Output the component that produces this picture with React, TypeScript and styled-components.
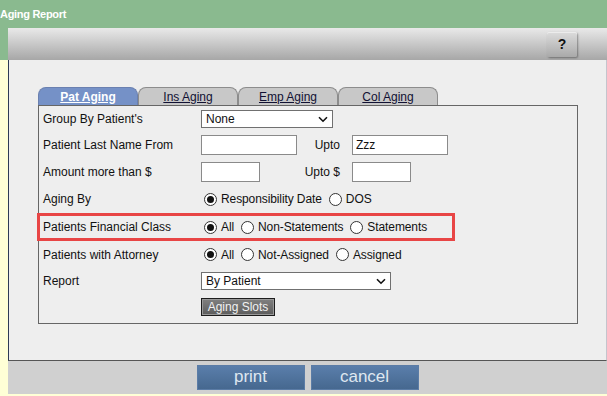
import React from "react";
import styled, { createGlobalStyle } from "styled-components";

const GlobalStyle = createGlobalStyle`
  html, body { margin: 0; padding: 0; }
  body {
    background: #ffffd6;
    font-family: "Liberation Sans", Arial, sans-serif;
    font-size: 12px;
    color: #111;
  }
`;

const Page = styled.div`
  width: 607px;
  height: 396px;
  overflow: hidden;
  background: linear-gradient(to bottom, #8aba8f 0, #8aba8f 60px, #ffffd6 60px);
`;

const TitleBar = styled.div`
  height: 28px;
  display: flex;
  align-items: center;
  color: #fff;
  font-weight: bold;
  font-size: 11px;
  letter-spacing: -0.3px;
`;

const Window = styled.div`
  margin-left: 8px;
  width: 599px;
`;

const Toolbar = styled.div`
  height: 32px;
  background: linear-gradient(#e9e9e9, #a7a7a7);
  display: flex;
  justify-content: flex-end;
  align-items: center;
  padding-right: 30px;
`;

const HelpButton = styled.button`
  width: 30px;
  height: 25px;
  border: 0;
  border-radius: 2px;
  background: linear-gradient(#dcdcdc, #a9a9a9);
  box-shadow: 1px 1px 2px rgba(0, 0, 0, 0.35), inset 0 1px 0 #ececec;
  font: bold 14px "Liberation Sans", Arial, sans-serif;
  color: #111;
  padding: 0;
`;

const Panel = styled.div`
  background: #eeeeee;
  border-left: 1px solid #2e3a55;
  border-right: 1px solid #c4c4cc;
  border-bottom: 1px solid #555;
  padding: 27px 0 36px 29px;
`;

const Tabs = styled.div`
  display: flex;
  height: 18px;
`;

const Tab = styled.div<{ $active?: boolean }>`
  width: 100px;
  height: 18px;
  box-sizing: border-box;
  border: 1px solid ${(p) => (p.$active ? "#6a80b0" : "#8c8c8c")};
  border-bottom: none;
  border-radius: 8px 8px 0 0;
  background: ${(p) => (p.$active ? "#7591c7" : "#c8c8c8")};
  color: ${(p) => (p.$active ? "#fff" : "#111133")};
  font-weight: ${(p) => (p.$active ? "bold" : "normal")};
  text-decoration: underline;
  text-align: center;
  line-height: 18px;
  cursor: pointer;
`;

const Box = styled.div`
  width: 540px;
  box-sizing: border-box;
  border: 1px solid #666;
  padding-bottom: 2px;
`;

const Row = styled.div<{ $h: number; $hl?: boolean }>`
  display: grid;
  grid-template-columns: 158px auto;
  align-items: center;
  box-sizing: border-box;
  height: ${(p) => p.$h}px;
  padding-left: ${(p) => (p.$hl ? 3 : 4)}px;
  ${(p) =>
    p.$hl &&
    `
    margin-left: -2px;
    width: 418px;
    border: 3px solid #e84545;
  `}
`;

const Label = styled.span`
  white-space: nowrap;
`;

const Controls = styled.div`
  display: flex;
  align-items: center;
`;

const SelectWrap = styled.div<{ $w: number }>`
  position: relative;
  width: ${(p) => p.$w}px;
  height: 18px;
`;

const Select = styled.select`
  appearance: none;
  width: 100%;
  height: 18px;
  box-sizing: border-box;
  border: 1px solid #707070;
  background: #fff;
  padding: 0 0 0 4px;
  font: 12px "Liberation Sans", Arial, sans-serif;
  color: #111;
  outline: none;
`;

const Chevron = styled.svg`
  position: absolute;
  right: 5px;
  top: 6px;
  pointer-events: none;
`;

const TextInput = styled.input<{ $w: number }>`
  width: ${(p) => p.$w}px;
  height: 20px;
  box-sizing: border-box;
  border: 1px solid #8a8a8a;
  background: #fff;
  padding: 0 3px;
  font: 12px "Liberation Sans", Arial, sans-serif;
  color: #111;
  outline: none;
`;

const SubLabel = styled.span<{ $w: number }>`
  width: ${(p) => p.$w}px;
  box-sizing: border-box;
  padding-right: 12px;
  text-align: right;
`;

const RadioLabel = styled.label`
  display: inline-flex;
  align-items: center;
  margin-right: 4px;
  white-space: nowrap;
  letter-spacing: -0.1px;
  cursor: pointer;
`;

const RadioDot = styled.span<{ $on?: boolean }>`
  width: 13px;
  height: 13px;
  box-sizing: border-box;
  border-radius: 50%;
  border: 1px solid #333;
  background: #fff;
  margin: 0 4px 0 3px;
  display: inline-flex;
  align-items: center;
  justify-content: center;
  &::after {
    content: "";
    width: 7px;
    height: 7px;
    border-radius: 50%;
    background: ${(p) => (p.$on ? "#111" : "transparent")};
  }
`;

const SlotsButton = styled.button`
  width: 74px;
  height: 18px;
  padding: 0;
  border: 1px solid #1c1c1c;
  background: linear-gradient(#808080, #5c5c5c);
  box-shadow: inset 0 0 0 1px #999;
  color: #f2f2f2;
  font: 12px "Liberation Sans", Arial, sans-serif;
`;

const Footer = styled.div`
  height: 33px;
  box-sizing: border-box;
  background: #d0d0d0;
  display: flex;
  justify-content: center;
  align-items: flex-start;
  gap: 6px;
  padding-top: 4px;
`;

const ActionButton = styled.button`
  width: 108px;
  height: 25px;
  border: 1px solid #5b7ca6;
  background: linear-gradient(#5a7eab, #46688f);
  color: #dfe7f0;
  font: 17px "Liberation Sans", Arial, sans-serif;
  padding: 0 0 2px;
`;

const Radio: React.FC<{ label: string; on?: boolean }> = ({ label, on }) => (
  <RadioLabel>
    <RadioDot $on={on} />
    {label}
  </RadioLabel>
);

const Dropdown: React.FC<{ w: number; value: string }> = ({ w, value }) => (
  <SelectWrap $w={w}>
    <Select defaultValue={value}>
      <option>{value}</option>
    </Select>
    <Chevron width="10" height="7" viewBox="0 0 10 7">
      <path d="M1 1.2 L5 5.2 L9 1.2" fill="none" stroke="#111" strokeWidth="1.6" />
    </Chevron>
  </SelectWrap>
);

const App: React.FC = () => {
  return (
    <Page>
      <GlobalStyle />
      <TitleBar>Aging Report</TitleBar>
      <Window>
        <Toolbar>
          <HelpButton>?</HelpButton>
        </Toolbar>
        <Panel>
          <Tabs>
            <Tab $active>Pat Aging</Tab>
            <Tab>Ins Aging</Tab>
            <Tab>Emp Aging</Tab>
            <Tab>Col Aging</Tab>
          </Tabs>
          <Box>
            <Row $h={25}>
              <Label>Group By Patient's</Label>
              <Controls>
                <Dropdown w={132} value="None" />
              </Controls>
            </Row>
            <Row $h={28}>
              <Label>Patient Last Name From</Label>
              <Controls>
                <TextInput $w={96} />
                <SubLabel $w={55}>Upto</SubLabel>
                <TextInput $w={96} defaultValue="Zzz" />
              </Controls>
            </Row>
            <Row $h={26}>
              <Label>Amount more than $</Label>
              <Controls>
                <TextInput $w={59} />
                <SubLabel $w={92}>Upto $</SubLabel>
                <TextInput $w={59} />
              </Controls>
            </Row>
            <Row $h={28}>
              <Label>Aging By</Label>
              <Controls>
                <Radio label="Responsibility Date" on />
                <Radio label="DOS" />
              </Controls>
            </Row>
            <Row $h={28} $hl>
              <Label>Patients Financial Class</Label>
              <Controls>
                <Radio label="All" on />
                <Radio label="Non-Statements" />
                <Radio label="Statements" />
              </Controls>
            </Row>
            <Row $h={27}>
              <Label>Patients with Attorney</Label>
              <Controls>
                <Radio label="All" on />
                <Radio label="Not-Assigned" />
                <Radio label="Assigned" />
              </Controls>
            </Row>
            <Row $h={25}>
              <Label>Report</Label>
              <Controls>
                <Dropdown w={190} value="By Patient" />
              </Controls>
            </Row>
            <Row $h={28}>
              <Label />
              <Controls>
                <SlotsButton>Aging Slots</SlotsButton>
              </Controls>
            </Row>
          </Box>
        </Panel>
        <Footer>
          <ActionButton>print</ActionButton>
          <ActionButton>cancel</ActionButton>
        </Footer>
      </Window>
    </Page>
  );
};

export default App;
